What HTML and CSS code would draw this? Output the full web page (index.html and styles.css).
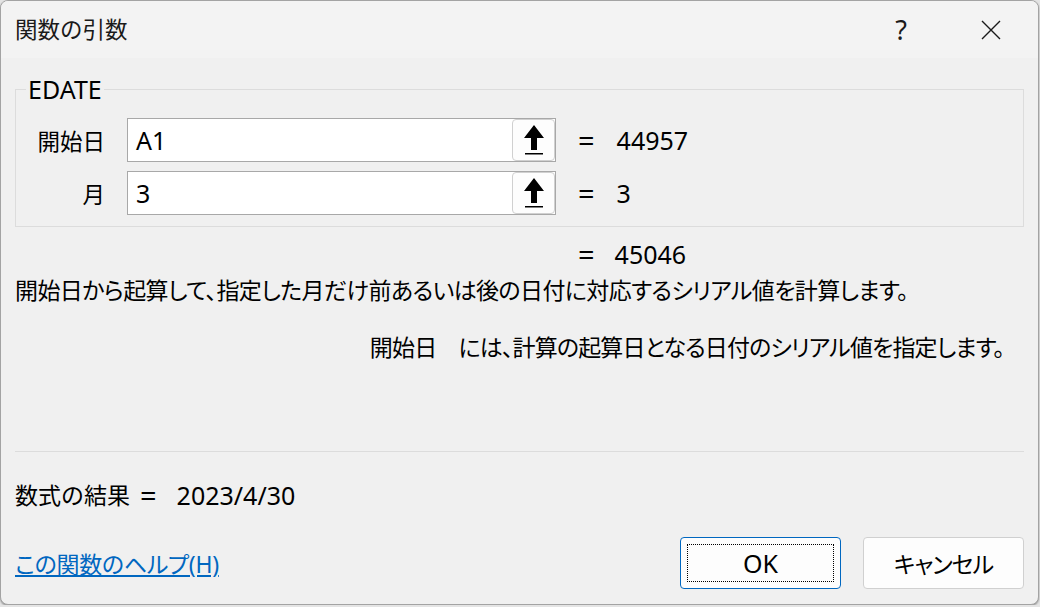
FILE: index.html
```html
<!DOCTYPE html>
<html lang="ja">
<head>
    <meta charset="UTF-8">
    <title>関数の引数</title>
    <link rel="stylesheet" href="styles.css">
</head>
<body>
<div class="dialog">
    <div class="titlebar">
        <span class="title jp">関数の引数</span>
        <span class="help-btn">?</span>
        <span class="close-btn">
            <svg width="20" height="20" viewBox="0 0 20 20"><path d="M1 1 L19 19 M19 1 L1 19" stroke="#1a1a1a" stroke-width="1.4" fill="none"/></svg>
        </span>
    </div>

    <div class="content">
        <fieldset class="args">
            <legend>EDATE</legend>
            <div class="arg-grid">
                <span class="arg-label jp">開始日</span>
                <div class="arg-input">
                    <span class="arg-value">A1</span>
                    <span class="ref-btn">
                        <svg width="20" height="30" viewBox="0 0 20 30"><path d="M10 0 L20 13 L13 13 L13 25 L7 25 L7 13 L0 13 Z" fill="#000"/><rect x="1" y="28" width="18" height="1.5" fill="#000"/></svg>
                    </span>
                </div>
                <span class="eq">=</span>
                <span class="arg-result">44957</span>

                <span class="arg-label jp">月</span>
                <div class="arg-input">
                    <span class="arg-value">3</span>
                    <span class="ref-btn">
                        <svg width="20" height="30" viewBox="0 0 20 30"><path d="M10 0 L20 13 L13 13 L13 25 L7 25 L7 13 L0 13 Z" fill="#000"/><rect x="1" y="28" width="18" height="1.5" fill="#000"/></svg>
                    </span>
                </div>
                <span class="eq">=</span>
                <span class="arg-result">3</span>
            </div>
        </fieldset>

        <div class="total">
            <span class="eq">=</span>
            <span class="arg-result">45046</span>
        </div>

        <p class="desc jp">開始日から起算して、指定した月だけ前あるいは後の日付に対応するシリアル値を計算します。</p>
        <p class="arg-desc jp">開始日　には、計算の起算日となる日付のシリアル値を指定します。</p>
    </div>

    <div class="footer">
        <div class="rule"></div>
        <div class="formula-result">
            <span class="jp">数式の結果</span>
            <span class="eq">=</span>
            <span class="arg-result">2023/4/30</span>
        </div>
        <div class="actions">
            <a class="help-link jp" href="#">この関数のヘルプ(H)</a>
            <button class="btn btn-ok"><span class="focus-ring">OK</span></button>
            <button class="btn btn-cancel jp">キャンセル</button>
        </div>
    </div>
</div>
</body>
</html>
```

FILE: styles.css
```css
body {
    margin: 0;
    background-color: #e4e4e4;
    font-family: "Noto Sans", "Noto Sans CJK JP", sans-serif;
    font-size: 25px;
    color: #000;
}
.jp {
    font-family: "Noto Sans", "Noto Sans CJK JP", sans-serif;
    font-size: 23px;
}
.dialog {
    box-sizing: border-box;
    width: 1039px;
    height: 605px;
    border: 1px solid #a3a3a3;
    border-radius: 8px;
    background-color: #f0f0f0;
    box-shadow: 0 1px 2px rgba(0, 0, 0, 0.35);
    display: flex;
    flex-direction: column;
    overflow: hidden;
}
.titlebar {
    height: 57px;
    background-color: #f3f3f3;
    display: flex;
    align-items: center;
    padding: 0 24px 0 14px;
}
.title {
    flex: 1;
    font-size: 22.5px;
    line-height: 30px;
    color: #1a1a1a;
}
.help-btn {
    width: 46px;
    text-align: center;
    font-size: 27px;
    line-height: 30px;
    color: #1a1a1a;
}
.close-btn {
    width: 46px;
    margin-left: 44px;
    display: flex;
    justify-content: center;
}
.content {
    padding: 0 14px;
}
.args {
    margin: 16px 0 0;
    padding: 14px 0 11px;
    border: 1px solid #dcdcdc;
    min-width: 0;
}
.args legend {
    margin-left: 10px;
    padding: 0 2px;
    line-height: 30px;
}
.arg-grid {
    display: grid;
    grid-template-columns: 89px 429px auto auto;
    grid-auto-rows: 44px;
    justify-content: start;
    column-gap: 22px;
    row-gap: 9px;
    align-items: center;
}
.arg-label {
    text-align: right;
    font-size: 22.5px;
}
.arg-input {
    box-sizing: border-box;
    height: 44px;
    border: 1px solid #a8a8a8;
    background-color: #fff;
    display: flex;
    align-items: center;
    justify-content: space-between;
    padding-left: 8px;
}
.ref-btn {
    box-sizing: border-box;
    width: 43px;
    height: 42px;
    border: 1px solid #d0d0d0;
    border-radius: 4px;
    background-color: #fdfdfd;
    display: flex;
    align-items: center;
    justify-content: center;
}
.eq {
    font-size: 29px;
    line-height: 30px;
}
.total {
    margin-top: 12px;
    padding-left: 563px;
    line-height: 30px;
    display: flex;
    gap: 20px;
}
.desc {
    margin: 6px 0 0;
    line-height: 30px;
    letter-spacing: -0.6px;
    font-feature-settings: "palt";
    white-space: nowrap;
}
.arg-desc {
    margin: 27px 0 0;
    padding-right: 20px;
    line-height: 30px;
    text-align: right;
    letter-spacing: -0.85px;
    font-feature-settings: "palt";
    white-space: nowrap;
}
.footer {
    margin-top: auto;
    padding: 0 14px 15px;
}
.rule {
    height: 1px;
    background-color: #dcdcdc;
}
.formula-result {
    margin-top: 28px;
    line-height: 30px;
    display: flex;
    align-items: center;
}
.formula-result .eq {
    margin-left: 10px;
    margin-right: 20px;
}
.actions {
    margin-top: 27px;
    display: flex;
    align-items: center;
}
.help-link {
    flex: 1;
    color: #0067c0;
    text-decoration: underline;
    letter-spacing: -0.3px;
    font-feature-settings: "palt";
}
.btn {
    box-sizing: border-box;
    width: 161px;
    height: 52px;
    border: 1px solid #d0d0d0;
    border-radius: 4px;
    background-color: #fdfdfd;
    font-family: "Noto Sans", "Noto Sans CJK JP", sans-serif;
    font-size: 25px;
    color: #000;
    padding: 0;
    display: flex;
    align-items: center;
    justify-content: center;
}
.btn-ok {
    border-color: #0067c0;
    padding: 6px;
}
.btn-cancel {
    margin-left: 22px;
    font-size: 23px;
    letter-spacing: -1px;
    font-feature-settings: "palt";
}
.focus-ring {
    box-sizing: border-box;
    width: 100%;
    height: 100%;
    border: 1px dotted #000;
    display: flex;
    align-items: center;
    justify-content: center;
}
```
